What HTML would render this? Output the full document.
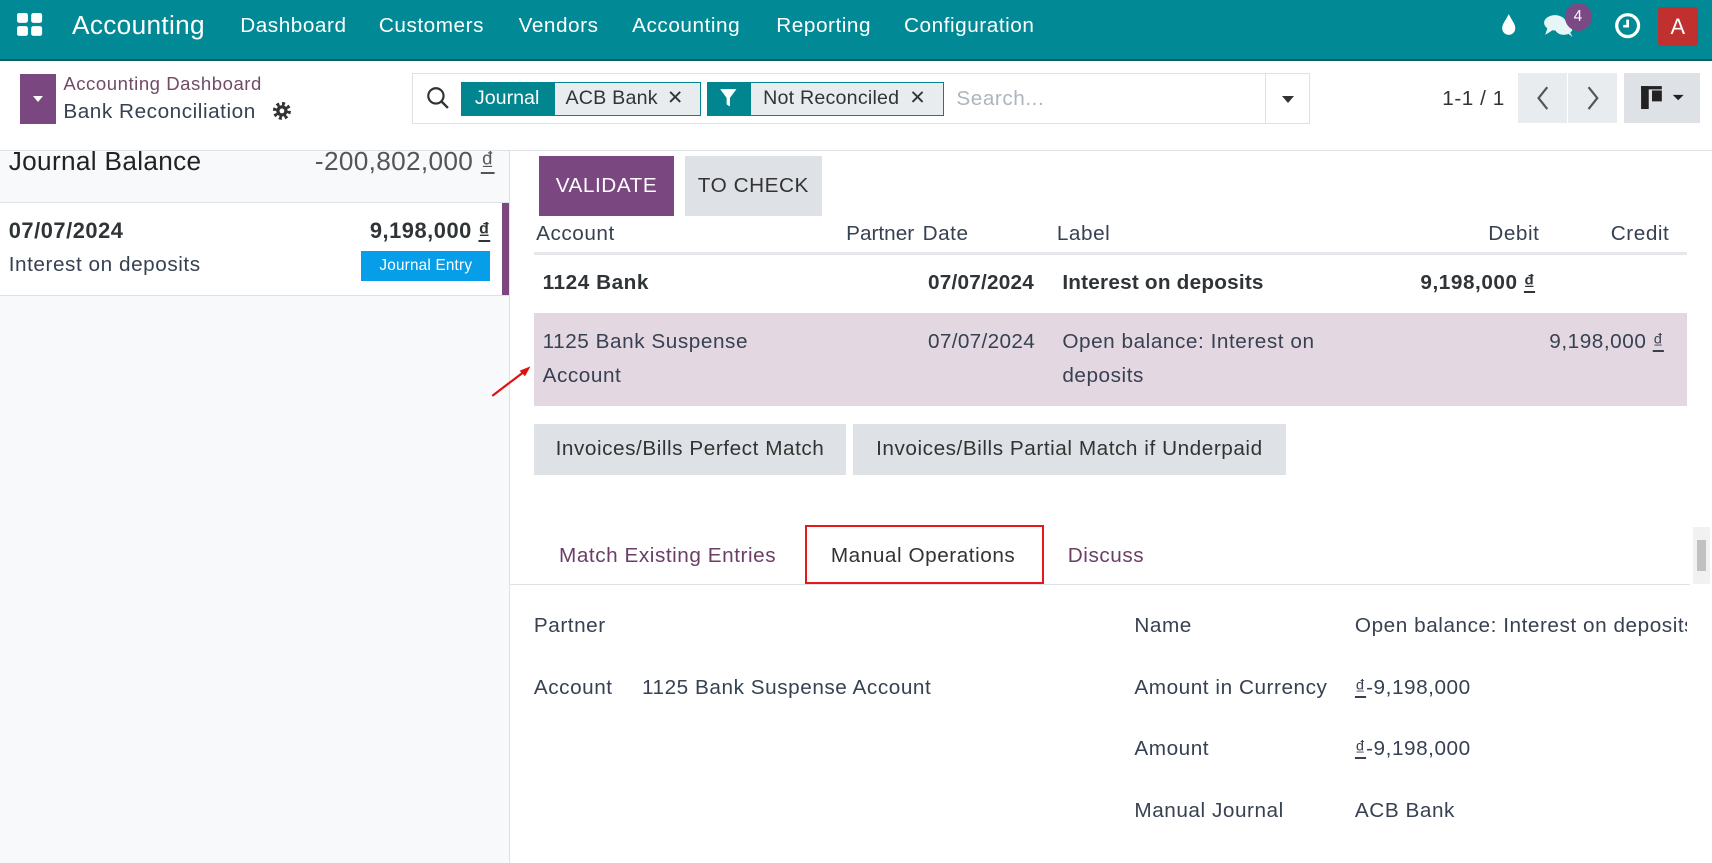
<!DOCTYPE html>
<html><head><meta charset="utf-8">
<style>
html,body{margin:0;padding:0;overflow:hidden;background:#fff}
#w{position:relative;width:1568px;height:790px;zoom:1.0918;font-family:"Liberation Sans",sans-serif;color:#374151;overflow:hidden;letter-spacing:0.5px}
.a{position:absolute;white-space:nowrap}
.nav{position:absolute;left:0;top:0;width:1568px;height:54px;background:#018a95;border-bottom:2px solid #0b5d63}
.nav .a{color:#fff;font-size:19px;top:13px}
.t{font-size:19px;color:#374151}
.b{font-weight:bold;color:#2f3437}
.btn{position:absolute;background:#dee2e6;color:#333;font-size:19px;display:flex;align-items:center;justify-content:center}
</style></head><body><div id="w">
<div class="nav">
 <svg class="a" style="left:16px;top:12px" width="24" height="22" viewBox="0 0 24 22"><rect x="0" y="0" width="10" height="9" rx="2" fill="#fff"/><rect x="13" y="0" width="10" height="9" rx="2" fill="#fff"/><rect x="0" y="12" width="10" height="9" rx="2" fill="#fff"/><rect x="13" y="12" width="10" height="9" rx="2" fill="#fff"/></svg>
 <div class="a" style="left:66px;top:9px;font-size:24px;letter-spacing:0.3px">Accounting</div>
 <div class="a" style="left:220px">Dashboard</div>
 <div class="a" style="left:347px">Customers</div>
 <div class="a" style="left:475px">Vendors</div>
 <div class="a" style="left:579px">Accounting</div>
 <div class="a" style="left:711px">Reporting</div>
 <div class="a" style="left:828px">Configuration</div>
 <svg class="a" style="left:1374px;top:12px" width="16" height="22" viewBox="0 0 16 22"><path d="M8 1 C5 7 2 10 2 14 a6 6 0 0 0 12 0 C14 10 11 7 8 1Z" fill="#fff"/></svg>
 <svg class="a" style="left:1413px;top:12px" width="30" height="24" viewBox="0 0 30 24"><ellipse cx="11" cy="9" rx="10" ry="7" fill="#e6f6f7"/><path d="M4 14 L2 20 L10 15Z" fill="#e6f6f7"/><ellipse cx="19" cy="14" rx="8" ry="6" fill="#e6f6f7"/><path d="M22 18 L27 22 L24 16Z" fill="#e6f6f7"/></svg>
 <div class="a" style="left:1433px;top:3px;width:25px;height:25px;border-radius:50%;background:#7a4a85;font-size:14px;text-align:center;line-height:25px;color:#fff">4</div>
 <svg class="a" style="left:1478px;top:11px" width="25" height="25" viewBox="0 0 25 25"><circle cx="12.5" cy="12.5" r="10" fill="none" stroke="#fff" stroke-width="3"/><path d="M12.5 7 V13 H8.5" fill="none" stroke="#fff" stroke-width="2.5"/></svg>
 <div class="a" style="left:1519px;top:6px;width:36px;height:36px;border-radius:3px;background:#c0302e;color:#fff;font-size:20px;text-align:center;line-height:36px">A</div>
</div>
<div class="a" style="left:18px;top:68px;width:33px;height:46px;background:#7b4781"></div>
<div class="a" style="left:30px;top:88px;width:0;height:0;border-left:5px solid transparent;border-right:5px solid transparent;border-top:6px solid #fff"></div>
<div class="a" style="left:58px;top:67px;font-size:17px;color:#714b67">Accounting Dashboard</div>
<div class="a" style="left:58px;top:92px;font-size:19px;color:#374151">Bank Reconciliation</div>
<svg class="a" style="left:248px;top:92px" width="20" height="20" viewBox="0 0 20 20"><circle cx="10" cy="10" r="6" fill="none" stroke="#333" stroke-width="4.5" stroke-dasharray="2.4 2.3"/><circle cx="10" cy="10" r="5.2" fill="#333"/><circle cx="10" cy="10" r="2.2" fill="#fff"/></svg>
<div class="a" style="left:377px;top:67px;width:821px;height:45px;border:1px solid #dee2e6"></div>
<div class="a" style="left:1159px;top:68px;width:1px;height:45px;background:#dee2e6"></div>
<div class="a" style="left:1174px;top:88px;border-left:6px solid transparent;border-right:6px solid transparent;border-top:7px solid #333"></div>
<svg class="a" style="left:389px;top:78px" width="24" height="24" viewBox="0 0 24 24"><circle cx="10" cy="10" r="7" fill="none" stroke="#333" stroke-width="2"/><path d="M15 15 L21 21" stroke="#333" stroke-width="2.2"/></svg>
<div class="a" style="left:422px;top:75px;width:85px;height:31px;background:#01858f;color:#fff;font-size:18px;line-height:31px;text-align:center;letter-spacing:0">Journal</div>
<div class="a" style="left:507px;top:75px;width:133px;height:29px;background:#e9ecef;border:1px solid #01858f;font-size:18px;line-height:29px;color:#333;letter-spacing:0.2px"><span style="margin-left:10px">ACB Bank</span><span style="position:absolute;left:103px;font-size:18px">✕</span></div>
<div class="a" style="left:648px;top:75px;width:39px;height:31px;background:#01858f"></div>
<svg class="a" style="left:659px;top:81px" width="17" height="19" viewBox="0 0 17 19"><path d="M1 1 H16 L10 9 V17 L7 15 V9Z" fill="#fff"/></svg>
<div class="a" style="left:687px;top:75px;width:176px;height:29px;background:#e9ecef;border:1px solid #01858f;font-size:18px;line-height:29px;color:#333;letter-spacing:0.2px"><span style="margin-left:11px">Not Reconciled</span><span style="position:absolute;left:145px;font-size:18px">✕</span></div>
<div class="a" style="left:876px;top:80px;font-size:19px;color:#adb5bd">Search...</div>
<div class="a" style="left:1321px;top:80px;font-size:19px;color:#333">1-1 / 1</div>
<div class="a" style="left:1390px;top:67px;width:45px;height:46px;background:#e9ecef"></div>
<div class="a" style="left:1436px;top:67px;width:45px;height:46px;background:#e9ecef"></div>
<svg class="a" style="left:1403px;top:78px" width="20" height="24" viewBox="0 0 20 24"><path d="M14 2 L6 12 L14 22" fill="none" stroke="#555" stroke-width="2"/></svg>
<svg class="a" style="left:1449px;top:78px" width="20" height="24" viewBox="0 0 20 24"><path d="M6 2 L14 12 L6 22" fill="none" stroke="#555" stroke-width="2"/></svg>
<div class="a" style="left:1487px;top:67px;width:70px;height:46px;background:#dee2e6"></div>
<svg class="a" style="left:1502px;top:78px" width="42" height="24" viewBox="0 0 42 24"><rect x="1" y="1" width="7" height="21" fill="#222"/><rect x="1" y="1" width="19" height="3" fill="#222"/><rect x="11" y="5" width="9" height="10" fill="#222"/><path d="M30 9 H40 L35 14Z" fill="#222"/></svg>
<div class="a" style="left:0;top:137px;width:1568px;height:1px;background:#dee2e6"></div>
<div class="a" style="left:0;top:138px;width:466px;height:652px;background:#f8f9fa;border-right:1px solid #dee2e6"></div>
<div class="a" style="left:8px;top:134px;font-size:24px;color:#222;letter-spacing:0.3px">Journal Balance</div>
<div class="a" style="right:1115px;top:134px;font-size:24px;color:#555;letter-spacing:0.3px">-200,802,000 <u>₫</u></div>
<div class="a" style="left:0;top:185px;width:466px;height:1px;background:#dee2e6"></div>
<div class="a" style="left:0;top:186px;width:460px;height:84px;background:#fff"></div>
<div class="a" style="left:460px;top:186px;width:6px;height:84px;background:#7b4781"></div>
<div class="a b" style="left:8px;top:200px;font-size:20px">07/07/2024</div>
<div class="a b" style="right:1119px;top:200px;font-size:20px">9,198,000 <u>₫</u></div>
<div class="a t" style="left:8px;top:232px">Interest on deposits</div>
<div class="a" style="left:331px;top:230px;width:118px;height:27px;background:#069ee8;color:#fff;font-size:14px;line-height:27px;text-align:center;letter-spacing:0.2px">Journal Entry</div>
<div class="a" style="left:0;top:270px;width:466px;height:1px;background:#dee2e6"></div>
<div class="btn" style="left:494px;top:143px;width:123px;height:55px;background:#7b4781;color:#fff">VALIDATE</div>
<div class="btn" style="left:627px;top:143px;width:126px;height:55px">TO CHECK</div>
<div class="a t" style="left:491px;top:203px">Account</div>
<div class="a t" style="left:775px;top:203px;letter-spacing:0">Partner</div>
<div class="a t" style="left:845px;top:203px">Date</div>
<div class="a t" style="left:968px;top:203px">Label</div>
<div class="a t" style="right:158px;top:203px">Debit</div>
<div class="a t" style="right:39px;top:203px">Credit</div>
<div class="a" style="left:489px;top:231px;width:1056px;height:3px;background:#e5e7ea"></div>
<div class="a t b" style="left:497px;top:248px">1124 Bank</div>
<div class="a t b" style="left:850px;top:248px;letter-spacing:0.2px">07/07/2024</div>
<div class="a t b" style="left:973px;top:248px;letter-spacing:0.2px">Interest on deposits</div>
<div class="a t b" style="right:162px;top:248px">9,198,000 <u>₫</u></div>
<div class="a" style="left:489px;top:287px;width:1056px;height:85px;background:#e3d8e2"></div>
<div class="a t" style="left:497px;top:302px">1125 Bank Suspense</div>
<div class="a t" style="left:497px;top:333px">Account</div>
<div class="a t" style="left:850px;top:302px;letter-spacing:0.3px">07/07/2024</div>
<div class="a t" style="left:973px;top:302px">Open balance: Interest on</div>
<div class="a t" style="left:973px;top:333px">deposits</div>
<div class="a t" style="right:44px;top:302px">9,198,000 <u>₫</u></div>
<svg class="a" style="left:448px;top:332px" width="42" height="34" viewBox="0 0 42 34"><path d="M3 31 L36 6" stroke="#e01010" stroke-width="2"/><path d="M38 4 L28 8 L33 13Z" fill="#e01010"/></svg>
<div class="btn" style="left:489px;top:388px;width:286px;height:47px">Invoices/Bills Perfect Match</div>
<div class="btn" style="left:781px;top:388px;width:397px;height:47px">Invoices/Bills Partial Match if Underpaid</div>
<div class="a" style="left:467px;top:535px;width:1081px;height:1px;background:#dee2e6"></div>
<div class="a" style="left:512px;top:498px;font-size:19px;color:#6b3e66">Match Existing Entries</div>
<div class="a" style="left:737px;top:481px;width:216px;height:50px;border:2px solid #e41a1a;background:#fff"></div>
<div class="a" style="left:761px;top:498px;font-size:19px;color:#333">Manual Operations</div>
<div class="a" style="left:978px;top:498px;font-size:19px;color:#6b3e66">Discuss</div>
<div class="a" style="left:1551px;top:483px;width:15px;height:52px;background:#f1f1f1"></div>
<div class="a" style="left:1554px;top:495px;width:9px;height:28px;background:#c1c1c1"></div>
<div class="a t" style="left:489px;top:562px">Partner</div>
<div class="a t" style="left:1039px;top:562px">Name</div>
<div class="a t" style="left:1241px;top:562px;width:304px;overflow:hidden">Open balance: Interest on deposits</div>
<div class="a t" style="left:489px;top:619px">Account</div>
<div class="a t" style="left:588px;top:619px">1125 Bank Suspense Account</div>
<div class="a t" style="left:1039px;top:619px">Amount in Currency</div>
<div class="a t" style="left:1241px;top:619px"><u>₫</u>-9,198,000</div>
<div class="a t" style="left:1039px;top:675px">Amount</div>
<div class="a t" style="left:1241px;top:675px"><u>₫</u>-9,198,000</div>
<div class="a t" style="left:1039px;top:732px">Manual Journal</div>
<div class="a t" style="left:1241px;top:732px">ACB Bank</div>
</div></body></html>
